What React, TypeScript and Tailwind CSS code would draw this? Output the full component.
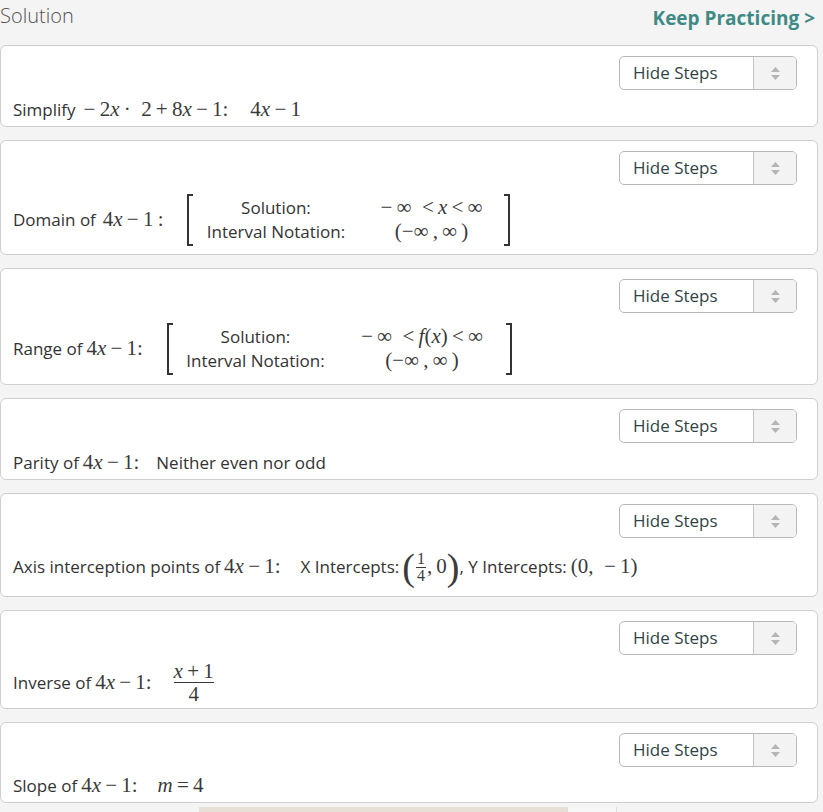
import React from "react";

const sans = "font-['Open_Sans',_'Noto_Sans',_sans-serif]";
const serif = "font-['Liberation_Serif',_'DejaVu_Serif',_serif]";

function M({ children, className = "" }: { children: React.ReactNode; className?: string }) {
    return <span className={`${serif} text-[21px] text-[#3a3a3a] ${className}`}>{children}</span>;
}

function X({ children = "x" }: { children?: React.ReactNode }) {
    return <i>{children}</i>;
}

function Fx() {
    return (
        <>
            4<X />&thinsp;&minus;&thinsp;1
        </>
    );
}

function HideSteps() {
    return (
        <div className="flex justify-end pr-[8px]">
            <div className="flex h-[34px] w-[178px] rounded-[5px] border border-[#b8b8b8] bg-white overflow-hidden">
                <div className="flex-1 flex items-center pl-[13px] text-[17px] text-[#2f4545]">Hide Steps</div>
                <div className="w-[43px] border-l border-[#c4c4c4] bg-[#f3f3f3] flex flex-col items-center justify-center gap-[3px]">
                    <svg width="9" height="5" viewBox="0 0 9 5"><path d="M0 5 L4.5 0 L9 5 Z" fill="#b5b5b5" /></svg>
                    <svg width="9" height="5" viewBox="0 0 9 5"><path d="M0 0 L4.5 5 L9 0 Z" fill="#b5b5b5" /></svg>
                </div>
            </div>
        </div>
    );
}

function Card({ children, body = "" }: { children: React.ReactNode; body?: string }) {
    return (
        <div className="w-[818px] rounded-[6px] border border-[#cfcfcf] bg-white pt-[10px] px-[12px]">
            <HideSteps />
            <div className={`flex items-center text-[17px] text-[#333] ${body}`}>{children}</div>
        </div>
    );
}

function Bracketed({ rows, labelW, valueW }: { rows: [string, React.ReactNode][]; labelW: string; valueW: string }) {
    return (
        <div className="flex items-stretch">
            <div className="w-[6px] border-l-2 border-t-2 border-b-2 border-[#333]" />
            <div className="flex flex-col py-[2px]">
                {rows.map(([label, value], i) => (
                    <div key={i} className="flex items-center h-[24px]">
                        <div className={`${labelW} text-center`}>{label}</div>
                        <div className={`${valueW} text-center`}>{value}</div>
                    </div>
                ))}
            </div>
            <div className="w-[6px] border-r-2 border-t-2 border-b-2 border-[#333]" />
        </div>
    );
}

export default function App() {
    return (
        <div className={`min-h-screen w-full bg-[#f4f4f4] ${sans}`}>
            <div className="flex items-center justify-between h-[36px] pr-[8px]">
                <span className="text-[20px] font-light text-[#555] -mt-[5px]">Solution</span>
                <span className="text-[19px] font-bold text-[#3f8a84]">Keep Practicing &gt;</span>
            </div>

            <div className="flex flex-col gap-[13px] mt-[9px]">
                <Card body="h-[36px] pt-[4px]">
                    <span className="mr-[8px]">Simplify</span>
                    <M>
                        &minus;&thinsp;2<X />&thinsp;&middot;&ensp;2&thinsp;+&thinsp;8<X />&thinsp;&minus;&thinsp;1:
                    </M>
                    <M className="ml-[22px]"><Fx /></M>
                </Card>

                <Card body="h-[69px]">
                    <span className="mr-[7px]">Domain of</span>
                    <M><Fx />&thinsp;:</M>
                    <span className="ml-[24px]">
                        <Bracketed
                            labelW="w-[165px]"
                            valueW="w-[146px]"
                            rows={[
                                ["Solution:", <M key="a">&minus;&thinsp;&infin;&ensp;&lt;&thinsp;<X />&thinsp;&lt;&thinsp;&infin;</M>],
                                ["Interval Notation:", <M key="b">(&minus;&infin;&thinsp;,&thinsp;&infin;&thinsp;)</M>],
                            ]}
                        />
                    </span>
                </Card>

                <Card body="h-[71px]">
                    <span className="mr-[4px]">Range of</span>
                    <M><Fx />:</M>
                    <span className="ml-[24px]">
                        <Bracketed
                            labelW="w-[165px]"
                            valueW="w-[168px]"
                            rows={[
                                ["Solution:", <M key="a">&minus;&thinsp;&infin;&ensp;&lt;&thinsp;<X>f</X>(<X />)&thinsp;&lt;&thinsp;&infin;</M>],
                                ["Interval Notation:", <M key="b">(&minus;&infin;&thinsp;,&thinsp;&infin;&thinsp;)</M>],
                            ]}
                        />
                    </span>
                </Card>

                <Card body="h-[36px] pt-[4px]">
                    <span className="mr-[4px]">Parity of</span>
                    <M><Fx />:</M>
                    <span className="ml-[17px]">Neither even nor odd</span>
                </Card>

                <Card body="h-[58px]">
                    <span className="mr-[4px]">Axis interception points of</span>
                    <M><Fx />:</M>
                    <span className="ml-[20px] mr-[3px]">X Intercepts:</span>
                    <M className="flex items-center">
                        <span className="text-[38px] font-light leading-none">(</span>
                        <span className="inline-flex flex-col items-center text-[16px] leading-[16px] mx-[1px]">
                            <span>1</span>
                            <span className="w-[10px] border-t border-[#3a3a3a]" />
                            <span>4</span>
                        </span>
                        <span>,&thinsp;0</span>
                        <span className="text-[38px] font-light leading-none">)</span>
                    </M>
                    <span className="mr-[4px]">, Y Intercepts:</span>
                    <M>(0,&ensp;&minus;&thinsp;1)</M>
                </Card>

                <Card body="h-[53px] pt-[2px]">
                    <span className="mr-[4px]">Inverse of</span>
                    <M><Fx />:</M>
                    <M className="ml-[21px] inline-flex flex-col items-center text-[18px] leading-[18px]">
                        <span className="px-[1px] pb-[2px]">
                            <X />&thinsp;+&thinsp;1
                        </span>
                        <span className="w-[40px] border-t border-[#3a3a3a]" />
                        <span className="pt-[2px]">4</span>
                    </M>
                </Card>

                <Card body="h-[35px] pt-[3px]">
                    <span className="mr-[4px]">Slope of</span>
                    <M><Fx />:</M>
                    <M className="ml-[20px]">
                        <X>m</X>&thinsp;=&thinsp;4
                    </M>
                </Card>
            </div>

            <div className="flex mt-[4px] ml-[199px] h-[5px]">
                <div className="w-[368px] bg-[#e6e0d6]" />
                <div className="w-[50px] border-l border-r border-[#ddd] bg-[#f7f7f7]" />
            </div>
        </div>
    );
}
